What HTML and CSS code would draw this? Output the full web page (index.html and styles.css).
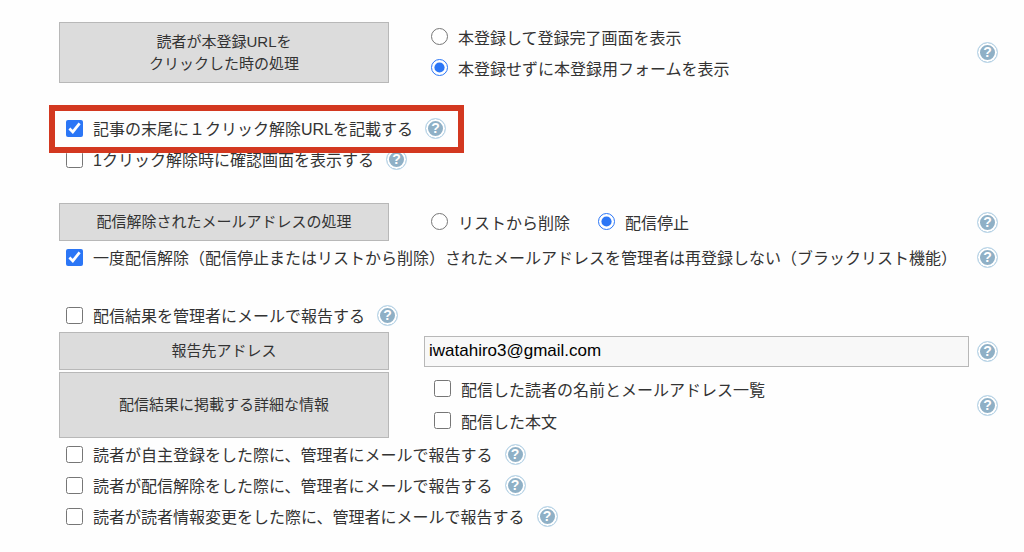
FILE: index.html
```
<!DOCTYPE html>
<html lang="ja">
<head>
    <meta charset="UTF-8">
    <meta name="viewport" content="width=device-width, initial-scale=1.0">
    <title>登録・解除設定</title>
    <link rel="stylesheet" href="styles.css">
</head>
<body>
    <form class="settings">
        <section class="group">
            <div class="setting" role="radiogroup" aria-labelledby="registerTitle">
                <div class="setting-title tall" id="registerTitle">読者が本登録URLを<br>クリックした時の処理</div>
                <div class="options">
                    <label class="option"><input type="radio" name="register" value="complete">本登録して登録完了画面を表示</label>
                    <label class="option"><input type="radio" name="register" value="form" checked>本登録せずに本登録用フォームを表示</label>
                </div>
                <button type="button" class="help">?</button>
            </div>
        </section>

        <section class="group unsubscribe">
            <div class="check-row highlight">
                <label class="option"><input type="checkbox" name="oneclick" checked>記事の末尾に１クリック解除URLを記載する</label>
                <button type="button" class="help">?</button>
            </div>
            <div class="check-row">
                <label class="option"><input type="checkbox" name="confirm">1クリック解除時に確認画面を表示する</label>
                <button type="button" class="help">?</button>
            </div>
        </section>

        <section class="group">
            <div class="setting" role="radiogroup" aria-labelledby="removeTitle">
                <div class="setting-title" id="removeTitle">配信解除されたメールアドレスの処理</div>
                <div class="options inline">
                    <label class="option"><input type="radio" name="remove" value="delete">リストから削除</label>
                    <label class="option"><input type="radio" name="remove" value="stop" checked>配信停止</label>
                </div>
                <button type="button" class="help">?</button>
            </div>
            <div class="check-row wide">
                <label class="option"><input type="checkbox" name="blacklist" checked>一度配信解除（配信停止またはリストから削除）されたメールアドレスを管理者は再登録しない（ブラックリスト機能）</label>
                <button type="button" class="help">?</button>
            </div>
        </section>

        <section class="group">
            <div class="check-row">
                <label class="option"><input type="checkbox" name="report">配信結果を管理者にメールで報告する</label>
                <button type="button" class="help">?</button>
            </div>
            <div class="setting">
                <label class="setting-title" for="address">報告先アドレス</label>
                <input type="text" class="text-field" id="address" name="address" value="iwatahiro3@gmail.com">
                <button type="button" class="help">?</button>
            </div>
            <div class="setting" role="group" aria-labelledby="detailTitle">
                <div class="setting-title detail" id="detailTitle">配信結果に掲載する詳細な情報</div>
                <div class="options indent">
                    <label class="option"><input type="checkbox" name="list">配信した読者の名前とメールアドレス一覧</label>
                    <label class="option"><input type="checkbox" name="body">配信した本文</label>
                </div>
                <button type="button" class="help">?</button>
            </div>
            <div class="check-row">
                <label class="option"><input type="checkbox" name="onRegister">読者が自主登録をした際に、管理者にメールで報告する</label>
                <button type="button" class="help">?</button>
            </div>
            <div class="check-row">
                <label class="option"><input type="checkbox" name="onRemove">読者が配信解除をした際に、管理者にメールで報告する</label>
                <button type="button" class="help">?</button>
            </div>
            <div class="check-row">
                <label class="option"><input type="checkbox" name="onChange">読者が読者情報変更をした際に、管理者にメールで報告する</label>
                <button type="button" class="help">?</button>
            </div>
        </section>
    </form>
</body>
</html>
```

FILE: styles.css
```
* {
    margin: 0;
    padding: 0;
    box-sizing: border-box;
}

body {
    background-color: #fefefe;
    color: #333;
    font-family: "Liberation Sans", "Noto Sans CJK JP", sans-serif;
    font-size: 16px;
    line-height: 22px;
    text-spacing-trim: space-all;
    padding: 22px 26px 16px 59px;
}

.settings {
    display: flex;
    flex-direction: column;
    gap: 29px;
}

.group {
    display: flex;
    flex-direction: column;
    gap: 2px;
}

.unsubscribe {
    align-items: flex-start;
    padding-top: 2px;
}

/* title | field | help */
.setting {
    display: grid;
    grid-template-columns: 330px 1fr 21px;
    align-items: center;
}

.setting-title {
    display: flex;
    align-items: center;
    justify-content: center;
    min-height: 38px;
    background-color: #dcdcdc;
    border: 1px solid #b8b8b8;
    font-size: 15px;
    text-align: center;
}

.setting-title.tall {
    min-height: 61px;
}

.setting-title.detail {
    min-height: 66px;
}

.options {
    display: flex;
    flex-direction: column;
    gap: 2px;
    padding-left: 42px;
}

.options.inline {
    flex-direction: row;
    gap: 28px;
}

.options.indent {
    gap: 3px;
    padding-left: 45px;
}

.option {
    display: flex;
    align-items: center;
    gap: 10px;
    min-height: 29px;
    padding-top: 3px;
}

.option input {
    flex: none;
    width: 17px;
    height: 17px;
    margin-bottom: 4px;
    accent-color: #2b76f6;
}

.check-row {
    display: flex;
    align-items: center;
    gap: 12px;
    padding-left: 7px;
}

.check-row.wide {
    justify-content: space-between;
}

.highlight {
    position: relative;
}

/* red frame drawn over the row and its neighbour */
.highlight::after {
    content: "";
    position: absolute;
    top: -9px;
    right: -18px;
    bottom: -10px;
    left: -10px;
    border: 6px solid #d33820;
    pointer-events: none;
}

.text-field {
    height: 31px;
    margin: 0 8px 0 35px;
    padding: 0 4px;
    background-color: #f8f8f8;
    border: 1px solid #b8b8b8;
    color: #000;
    font-family: inherit;
    font-size: 17px;
}

.help {
    flex: none;
    width: 21px;
    height: 21px;
    background-color: #8fb0c6;
    border: 1px solid #bdd9ec;
    border-radius: 50%;
    box-shadow: inset 0 0 0 2px #fff;
    color: #fff;
    font-family: "Liberation Sans", sans-serif;
    font-size: 14px;
    font-weight: bold;
    line-height: 19px;
    text-align: center;
    cursor: pointer;
}
```
